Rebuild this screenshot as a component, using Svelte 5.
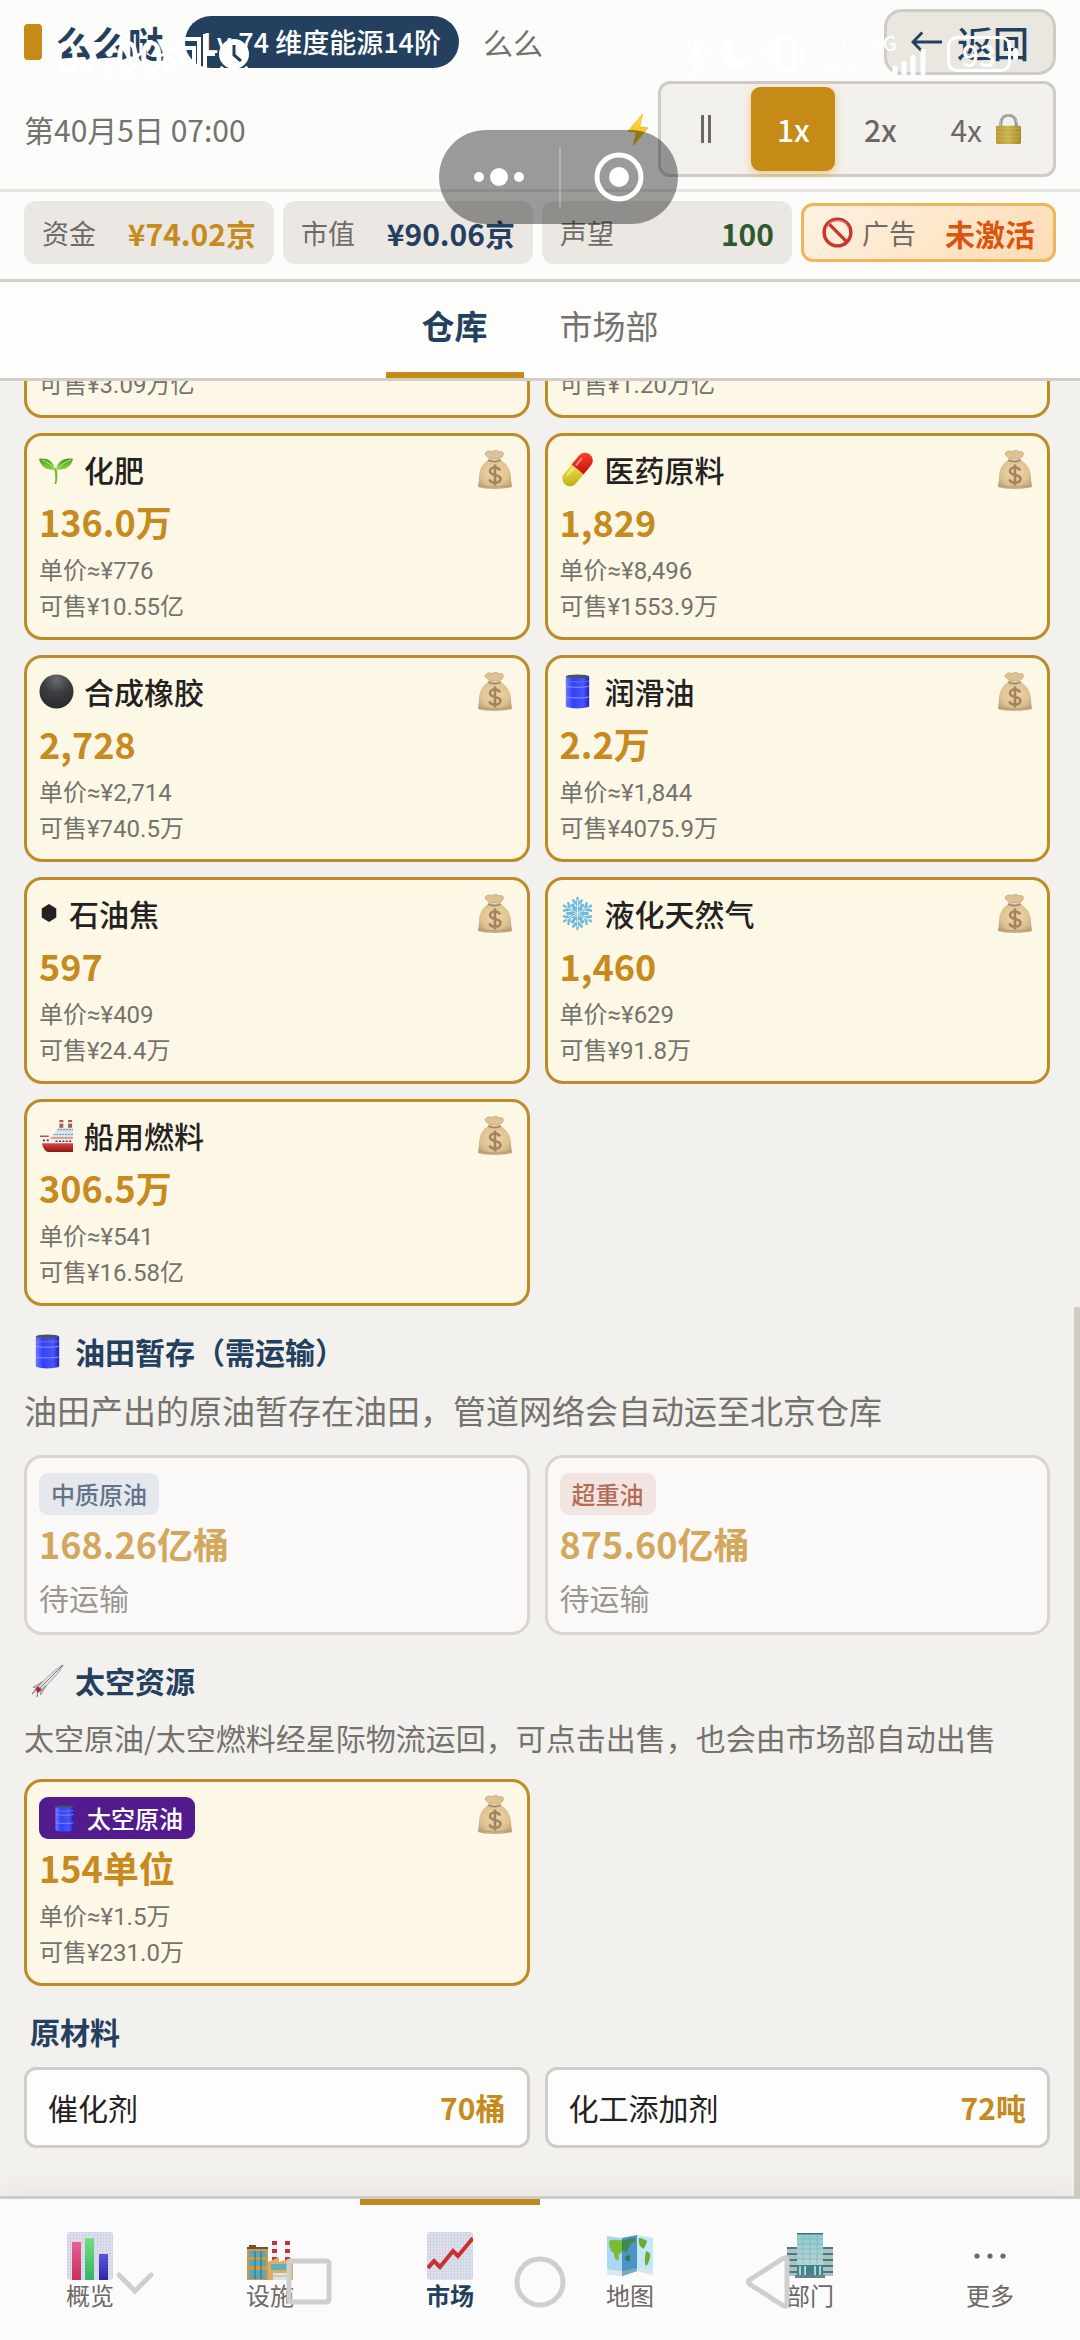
<script>
  const products = [
    { icon: 'drop', name: '柴油', amount: '5.2亿', price: '5,942', total: '3.09万亿' },
    { icon: 'drop', name: '汽油', amount: '1.9亿', price: '6,315', total: '1.20万亿' },
    { icon: 'sprout', name: '化肥', amount: '136.0万', price: '776', total: '10.55亿' },
    { icon: 'pill', name: '医药原料', amount: '1,829', price: '8,496', total: '1553.9万' },
    { icon: 'ball', name: '合成橡胶', amount: '2,728', price: '2,714', total: '740.5万' },
    { icon: 'barrel', name: '润滑油', amount: '2.2万', price: '1,844', total: '4075.9万' },
    { icon: 'hex', name: '石油焦', amount: '597', price: '409', total: '24.4万' },
    { icon: 'snow', name: '液化天然气', amount: '1,460', price: '629', total: '91.8万' },
    { icon: 'ship', name: '船用燃料', amount: '306.5万', price: '541', total: '16.58亿' }
  ];

  const pending = [
    { name: '中质原油', tone: 'blue', amount: '168.26亿桶' },
    { name: '超重油', tone: 'red', amount: '875.60亿桶' }
  ];

  const materials = [
    { name: '催化剂', amount: '70桶' },
    { name: '化工添加剂', amount: '72吨' }
  ];

  const nav = [
    { icon: 'bars', label: '概览' },
    { icon: 'factory', label: '设施' },
    { icon: 'trend', label: '市场' },
    { icon: 'map', label: '地图' },
    { icon: 'office', label: '部门' },
    { icon: 'more', label: '更多' }
  ];

  let speed = $state('1x');
  let tab = $state('仓库');
  let page = $state('市场');
</script>

{#snippet icon(name, cls)}
  <svg class={cls} viewBox="0 0 36 36" aria-hidden="true"><use href="#i-{name}" /></svg>
{/snippet}

<svg class="defs" aria-hidden="true">
  <defs>
    <linearGradient id="g-barrel"><stop offset="0" stop-color="#6f78ff" /><stop offset=".3" stop-color="#3440f5" /><stop offset=".75" stop-color="#4a55ff" /><stop offset="1" stop-color="#2020b8" /></linearGradient>
    <radialGradient id="g-bag" cx=".5" cy=".45" r=".6"><stop offset="0" stop-color="#eccb92" /><stop offset=".7" stop-color="#d3ae72" /><stop offset="1" stop-color="#a98350" /></radialGradient>
    <radialGradient id="g-ball" cx=".5" cy=".15" r=".9"><stop offset="0" stop-color="#6a6c6e" /><stop offset=".45" stop-color="#3b3e40" /><stop offset="1" stop-color="#262829" /></radialGradient>
    <linearGradient id="g-red" x1="0" y1="0" x2="1" y2="1"><stop offset="0" stop-color="#ff4a2e" /><stop offset="1" stop-color="#c60d06" /></linearGradient>
    <linearGradient id="g-yellow" x1="0" y1="0" x2="1" y2="1"><stop offset="0" stop-color="#f1e54c" /><stop offset="1" stop-color="#b9a512" /></linearGradient>
    <linearGradient id="g-hull" x1="0" y1="0" x2="0" y2="1"><stop offset="0" stop-color="#d9463d" /><stop offset="1" stop-color="#8e1512" /></linearGradient>
    <linearGradient id="g-bolt" x1="0" y1="0" x2="0" y2="1"><stop offset="0" stop-color="#ffe04a" /><stop offset="1" stop-color="#f0b400" /></linearGradient>
    <linearGradient id="g-lock"><stop offset="0" stop-color="#b79a35" /><stop offset=".5" stop-color="#cdb352" /><stop offset="1" stop-color="#a68a2b" /></linearGradient>
    <linearGradient id="g-leaf" x1="0" y1="0" x2="0" y2="1"><stop offset="0" stop-color="#4c9a1c" /><stop offset="1" stop-color="#8bd83f" /></linearGradient>
    <linearGradient id="g-pink" x1="0" y1="0" x2="0" y2="1"><stop offset="0" stop-color="#ee5e93" /><stop offset="1" stop-color="#c72f5c" /></linearGradient>
    <linearGradient id="g-green" x1="0" y1="0" x2="0" y2="1"><stop offset="0" stop-color="#72e07a" /><stop offset="1" stop-color="#36b16a" /></linearGradient>
    <linearGradient id="g-blue" x1="0" y1="0" x2="0" y2="1"><stop offset="0" stop-color="#5c54dc" /><stop offset="1" stop-color="#2c25ae" /></linearGradient>
    <linearGradient id="g-glass" x1="0" y1="0" x2="0" y2="1"><stop offset="0" stop-color="#8ccbd0" /><stop offset="1" stop-color="#c3d8d3" /></linearGradient>
    <pattern id="p-grid" width="3" height="3" patternUnits="userSpaceOnUse"><path d="M0 0H3M0 0V3" stroke="#b9bdd6" stroke-width=".6" /></pattern>

    <symbol id="i-drop" viewBox="0 0 36 36"><path d="M18 3c6 9 10 14 10 19a10 10 0 0 1-20 0C8 17 12 12 18 3Z" fill="#3a3d40" /></symbol>

    <symbol id="i-sprout" viewBox="0 0 36 36">
      <path d="M16 33c1.500-6 .5-12-.5-16l2-1c2 5 1.500 12 .5 17Z" fill="#79b43a" />
      <path d="M0 7c7-1 14 1 16.500 11C8 19 2 16 0 7Z" fill="url(#g-leaf)" />
      <path d="M35 7c-8-1-15 1-17.500 11C26 19 33 16 35 7Z" fill="url(#g-leaf)" />
      <path d="M3 8c5 2 10 5 14 10M33 8c-5 2-11 5-15 10" fill="none" stroke="#b8ec76" stroke-width="1" />
    </symbol>

    <symbol id="i-pill" viewBox="0 0 36 36">
      <g transform="rotate(40 18 18)">
        <path d="M10 18V6a8 8 0 0 1 16 0v12Z" fill="url(#g-red)" />
        <path d="M10 18v12a8 8 0 0 0 16 0V18Z" fill="url(#g-yellow)" />
        <path d="M14 7v8M14 20v9" stroke="#fff" stroke-opacity=".45" stroke-width="2" stroke-linecap="round" />
      </g>
    </symbol>

    <symbol id="i-ball" viewBox="0 0 36 36"><circle cx="18" cy="18" r="17.500" fill="url(#g-ball)" /></symbol>

    <symbol id="i-barrel" viewBox="0 0 36 36">
      <path d="M6 2.500v31c3 2.500 21 2.500 24 0v-31Z" fill="url(#g-barrel)" />
      <ellipse cx="18" cy="2.500" rx="12" ry="2" fill="#46536e" />
      <path d="M6 12.500c4 1.500 20 1.500 24 0M6 23.500c4 1.500 20 1.500 24 0" fill="none" stroke="#8f99ff" stroke-width="1" />
      <path d="M6 7c4 1.500 20 1.500 24 0" fill="none" stroke="#6f7bff" stroke-width=".8" />
    </symbol>

    <symbol id="i-hex" viewBox="0 0 18 22"><path d="M9 1l8 5v10l-8 5-8-5V6Z" fill="#24221f" /></symbol>

    <symbol id="i-snow" viewBox="0 0 36 36">
      <g fill="none" stroke="#6db7dc" stroke-width="2.400" stroke-linecap="round">
        <g id="arm"><path d="M18 18V2M13.500 4.500 18 9l4.500-4.500M12 9.500l6 5 6-5" /></g>
        <use href="#arm" transform="rotate(60 18 18)" /><use href="#arm" transform="rotate(120 18 18)" />
        <use href="#arm" transform="rotate(180 18 18)" /><use href="#arm" transform="rotate(240 18 18)" />
        <use href="#arm" transform="rotate(300 18 18)" />
      </g>
      <path d="M18 4v28M6 11l24 14M30 11 6 25" stroke="#d8f1fb" stroke-width="1" />
    </symbol>

    <symbol id="i-ship" viewBox="0 0 36 36">
      <path d="M21 2h4v9h-4zM30 2h4v9h-4z" fill="#a5585c" />
      <path d="M21 4h4v2h-4zM30 4h4v2h-4z" fill="#f0dfe0" />
      <path d="M20 10h15v4H17ZM17 14h18v6H13Z" fill="#d9e4ea" />
      <path d="M19 12h16M15 17h20" stroke="#6b93a8" stroke-width="1.200" stroke-dasharray="2 1" />
      <path d="M1 18h9l2 2h23v8H4Z" fill="#f4efec" />
      <path d="M1 18h9v1.500H1ZM12 20h23v1H12Z" fill="#c14f49" />
      <path d="M4 23h2m2 0h2m7 1h17" stroke="#3b4045" stroke-width="1.600" stroke-dasharray="2 1.500" />
      <path d="M3 26h32v9H9c-3-1-5-4-6-9Z" fill="url(#g-hull)" />
    </symbol>

    <symbol id="i-bag" viewBox="0 0 34 40">
      <path d="M12 10c-2-2-4-3-5-5 1-3 5-4 7-2 2-2 5-2 7 0 3-1 5 0 4 3 0 2-3 3-4 4Z" fill="#d4ae74" stroke="#a58253" stroke-width=".8" />
      <path d="M12 10C4 14 1 21 1 29c0 4-1 6-1 9 8 2.500 26 2.500 34 0 0-3-1-5-1-9 0-8-4-15-12-19-3 1.500-6 1.500-9 0Z" fill="url(#g-bag)" />
      <path d="M10 11c4 2 9 2 13 0" fill="none" stroke="#7f5f35" stroke-width="1.600" />
      <path d="M1 36c9 2.500 23 2.500 32 0" fill="none" stroke="#9b7a4a" stroke-width="1" />
      <path d="M22 21.500c-.8-2-2.700-3-5-3-2.800 0-5 1.400-5 3.700 0 5 10.500 2.500 10.500 7.600 0 2.400-2.300 3.900-5.400 3.900-2.700 0-4.900-1.100-5.600-3.400M17 15.500v21" fill="none" stroke="#80592b" stroke-width="2.600" />
    </symbol>

    <symbol id="i-rocket" viewBox="0 0 36 36">
      <path d="M34 2C29 4 14 17 8 25l3 3C19 22 32 8 34 2Z" fill="#e3e3e6" stroke="#8b8d93" stroke-width=".8" />
      <path d="M34 2 9.500 26.500" stroke="#77797f" stroke-width="1" />
      <path d="M13 19 3 25l4 1ZM17 23l-6 10-1-4Z" fill="#b9bbc1" stroke="#777" stroke-width=".6" />
      <path d="M8 24 4 29l3-1v4l5-5Z" fill="#a5283a" />
      <path d="M5 29 2 32M8 32l-1 3" stroke="#777" stroke-width="1.200" />
    </symbol>

    <symbol id="i-bolt" viewBox="0 0 24 36"><path d="M17 1 1 20l9 1-3 14 16-19-9-1Z" fill="url(#g-bolt)" stroke="#e3ab00" stroke-width=".6" /></symbol>

    <symbol id="i-lock" viewBox="0 0 26 32">
      <path d="M5 14V9a8 8 0 0 1 16 0v5" fill="none" stroke="#8e9094" stroke-width="3" />
      <path d="M4.500 13V9a8.500 8.500 0 0 1 17 0" fill="none" stroke="#c9cbce" stroke-width="1" />
      <rect x="0" y="12" width="26" height="19" rx="1.500" fill="url(#g-lock)" />
      <path d="M1 15h24M1 19h24M1 23h24M1 27h24" stroke="#dcc46a" stroke-opacity=".5" stroke-width=".8" />
    </symbol>

    <symbol id="i-ban" viewBox="0 0 36 36"><circle cx="18" cy="18" r="15.500" fill="none" stroke="#c8372d" stroke-width="4" /><path d="M8 8l20 20" stroke="#c8372d" stroke-width="4" /><path d="M5 13a14 14 0 0 1 26 0" fill="none" stroke="#ea8178" stroke-width="1.200" /></symbol>

    <symbol id="i-bars" viewBox="0 0 46 48">
      <rect width="46" height="48" rx="3" fill="#dfe0ee" /><rect width="46" height="48" rx="3" fill="url(#p-grid)" />
      <rect x="5" y="10" width="9" height="38" fill="url(#g-pink)" /><rect x="18" y="6" width="9" height="42" fill="url(#g-green)" /><rect x="32" y="22" width="9" height="26" fill="url(#g-blue)" />
    </symbol>

    <symbol id="i-trend" viewBox="0 0 46 48">
      <rect width="46" height="48" rx="3" fill="#dfe0ee" /><rect width="46" height="48" rx="3" fill="url(#p-grid)" />
      <path d="M1 36 7 29l6 6 13-16 5 5L46 6" fill="none" stroke="#c9322c" stroke-width="4" />
    </symbol>

    <symbol id="i-factory" viewBox="0 0 46 48">
      <path d="M25 8h5v24h-5zM38 8h5v24h-5z" fill="#f1eceb" /><path d="M25 9h5v4h-5zM25 17h5v4h-5zM25 25h5v3h-5zM38 9h5v4h-5zM38 17h5v4h-5zM38 25h5v3h-5z" fill="#b83742" />
      <path d="M0 15h21v33H0Z" fill="#cf9a4c" /><path d="M21 30l11-5v5l12-4 2 2v20H21Z" fill="#dcae62" />
      <path d="M0 15h21v2H0zM2 13h7v2H2z" fill="#75502c" />
      <path d="M2 19h17v6H2zM2 28h17v6H2zM2 38h17v9H2z" fill="#5da7b3" /><path d="M8 19v28M14 19v28" stroke="#2f6f7b" stroke-width="1" />
      <path d="M24 32h17v6H24z" fill="#5fb0bd" /><path d="M26 41h18v7H26z" fill="#e2e2e4" /><path d="M26 44h18" stroke="#b2b2b6" />
    </symbol>

    <symbol id="i-map" viewBox="0 0 46 48">
      <path d="M0 4 15 6v38L0 42Z" fill="#a9d8f2" /><path d="M15 6 30 3v36l-15 5Z" fill="#4a95c6" /><path d="M30 3l16 3v37l-16-4Z" fill="#c4e6f6" />
      <path d="M0 37l15 2v5L0 42ZM30 36l16 3v4l-16-4Z" fill="#dfe6ea" /><path d="M15 39l15-3v3l-15 5Z" fill="#7fa8bd" />
      <path d="M2 9c5-3 8 0 13-1v13c-3-1-4 3-3 6-3 4-5-1-5-6-3-1-5-5-5-12Z" fill="#7dbb34" /><path d="M15 8c5 0 8-2 13-2v4c-5 1-6 5-8 10-2 1-2-2-5-1Z" fill="#3c8a4d" />
      <path d="M32 6c4 0 6 2 8 3-1 5-3 6-3 8-3-2-6-3-5-11ZM39 19c3 1 5 3 4 6-1 4-2 8-4 9-2-5-1-9 0-15Z" fill="#69ad2e" /><path d="M19 24l4-1v6l-5-1Z" fill="#2f7b4c" />
    </symbol>

    <symbol id="i-office" viewBox="0 0 46 48">
      <path d="M0 16h46v28H0Z" fill="#a8c3c2" /><path d="M0 16h11M0 22h11M0 28h11M0 34h11M0 40h11M36 16h10M36 22h10M36 28h10M36 34h10M36 40h10" stroke="#50777d" stroke-width="1.800" />
      <path d="M10 1h26v43H10Z" fill="url(#g-glass)" /><path d="M10 1h26v1.500H10Z" fill="#4e6a72" />
      <path d="M10 7h26M10 12h26M10 17h26M10 22h26M10 27h26M16 2v30M23 2v30M30 2v30" stroke="#7fb0b4" stroke-width=".6" />
      <path d="M10 33h26v10H10z" fill="#3f8390" /><path d="M13 34v9M18 34v9M28 34v9M33 34v9" stroke="#cfe6e4" stroke-width="1.600" /><path d="M8 43h30v3H8z" fill="#6d8088" />
    </symbol>

    <symbol id="i-more" viewBox="0 0 46 48"><g fill="#6b6865"><circle cx="10" cy="24" r="2.600" /><circle cx="23" cy="24" r="2.600" /><circle cx="36" cy="24" r="2.600" /></g></symbol>
  </defs>
</svg>

<div class="app">
  <header class="top">
    <div class="row brand">
      <span class="mark"></span>
      <h1>么么哒</h1>
      <span class="level">Lv.74 维度能源14阶</span>
      <span class="owner">么么</span>
      <button class="back"><svg viewBox="0 0 34 26" aria-hidden="true"><path d="M33 13H2M12 3 2 13l10 10" /></svg>返回</button>
    </div>
    <div class="row clock">
      <time>第40月5日 07:00</time>
      <svg class="bolt" viewBox="0 0 24 36" aria-hidden="true"><use href="#i-bolt" /></svg>
      <div class="speeds">
        <button class:on={speed === 'pause'} onclick={() => (speed = 'pause')} aria-label="暂停"><svg class="pause" viewBox="0 0 10 28" aria-hidden="true"><path d="M1.500 0v28M8.500 0v28" /></svg></button>
        <button class:on={speed === '1x'} onclick={() => (speed = '1x')}>1x</button>
        <button class:on={speed === '2x'} onclick={() => (speed = '2x')}>2x</button>
        <button class="locked">4x <svg class="lock" viewBox="0 0 26 32" aria-hidden="true"><use href="#i-lock" /></svg></button>
      </div>
    </div>
  </header>

  <section class="stats">
    <div class="stat"><span>资金</span><b class="gold">¥74.02京</b></div>
    <div class="stat"><span>市值</span><b class="navy">¥90.06京</b></div>
    <div class="stat"><span>声望</span><b class="green">100</b></div>
    <button class="stat ad"><span>{@render icon('ban', 'ban')}广告</span><b>未激活</b></button>
  </section>

  <nav class="tabs">
    {#each ['仓库', '市场部'] as t}
      <button class:on={tab === t} onclick={() => (tab = t)}>{t}</button>
    {/each}
  </nav>

  <div class="view">
    <main>
      <div class="content">
        <div class="grid">
          {#each products as p}
            <button class="card">
              <span class="head">
                <span class="name">{@render icon(p.icon, p.icon === 'hex' ? 'emoji slim' : 'emoji')}{p.name}</span>
                <svg class="bag" viewBox="0 0 34 40" aria-hidden="true"><use href="#i-bag" /></svg>
              </span>
              <b class="amount">{p.amount}</b>
              <span class="sub">单价≈¥{p.price}</span>
              <span class="sub">可售¥{p.total}</span>
            </button>
          {/each}
        </div>

        <h2>{@render icon('barrel', 'emoji')}油田暂存（需运输）</h2>
        <p class="large">油田产出的原油暂存在油田，管道网络会自动运至北京仓库</p>
        <div class="grid">
          {#each pending as p}
            <div class="card waiting">
              <span class="head tagged"><span class="tag {p.tone}">{p.name}</span></span>
              <b class="amount">{p.amount}</b>
              <span class="state">待运输</span>
            </div>
          {/each}
        </div>

        <h2>{@render icon('rocket', 'emoji')}太空资源</h2>
        <p>太空原油/太空燃料经星际物流运回，可点击出售，也会由市场部自动出售</p>
        <div class="grid">
          <button class="card">
            <span class="head tagged">
              <span class="tag space">{@render icon('barrel', 'mini')}太空原油</span>
              <svg class="bag" viewBox="0 0 34 40" aria-hidden="true"><use href="#i-bag" /></svg>
            </span>
            <b class="amount">154单位</b>
            <span class="sub">单价≈¥1.5万</span>
            <span class="sub">可售¥231.0万</span>
          </button>
        </div>

        <h2>原材料</h2>
        <div class="grid">
          {#each materials as m}
            <div class="material"><span>{m.name}</span><b>{m.amount}</b></div>
          {/each}
        </div>
      </div>
    </main>
    <span class="thumb"></span>
  </div>

  <nav class="bottom">
    {#each nav as n}
      <button class:on={page === n.label} onclick={() => (page = n.label)}>
        <svg viewBox="0 0 46 48" aria-hidden="true"><use href="#i-{n.icon}" /></svg>
        <span>{n.label}</span>
      </button>
    {/each}
    <svg class="sysnav" viewBox="0 0 720 60" aria-hidden="true">
      <path d="M29 25l16 16 16-16" />
      <rect x="199" y="11" width="40" height="41" rx="2" />
      <circle cx="450" cy="32" r="23" />
      <path d="M697 10v44q-1 4-5 1l-31-20q-5-3 0-6l31-20q4-3 5 1Z" />
    </svg>
  </nav>

  <div class="status">
    <span class="time">07:00</span>
    <svg class="left-icons" viewBox="0 0 90 40" aria-hidden="true">
      <g fill="none" stroke="#fff" stroke-width="4"><path d="M2 14a20 20 0 0 1 20 20M2 23a11 11 0 0 1 11 11M18 5h18v28M22 14h9v16M42 0v36M42 20h10" /></g>
      <circle cx="4" cy="33" r="3" fill="#fff" />
      <circle cx="71" cy="20" r="15" fill="#fff" /><path d="M60 33l-3 4M82 33l3 4" stroke="#fff" stroke-width="4" />
      <path d="M71 11v10l7 6" fill="none" stroke="#24405f" stroke-width="3" />
    </svg>
    <svg class="right-icons" viewBox="0 0 124 40" aria-hidden="true">
      <path d="M3 11l18 17-9 8V4l9 8L3 29" fill="none" stroke="#fff" stroke-width="4" />
      <path d="M50 4a16 16 0 1 0 17 22A15 15 0 0 1 50 4Z" fill="#fff" />
      <g fill="none" stroke="#fff" stroke-width="4"><rect x="93" y="4" width="17" height="32" rx="3" /><path d="M87 10l-2 6 2 6-2 6M116 10l2 6-2 6 2 6" /></g>
    </svg>
    <span class="rate"><span>0</span><span>K/s</span></span>
    <span class="net">5G</span>
    <svg class="signal" viewBox="0 0 38 26" aria-hidden="true"><path d="M4 19v5M13 14v10M22 8v16M32 2v22" /></svg>
    <span class="battery">93</span>
    <span class="nub"></span>
  </div>

  <div class="capsule">
    <button aria-label="菜单"><svg viewBox="0 0 60 60" aria-hidden="true"><g fill="#fff"><circle cx="10" cy="30" r="5" /><circle cx="30" cy="30" r="9" /><circle cx="50" cy="30" r="5" /></g></svg></button>
    <button aria-label="关闭"><svg viewBox="0 0 60 60" aria-hidden="true"><circle cx="30" cy="30" r="22" fill="none" stroke="#fff" stroke-width="5" /><circle cx="30" cy="30" r="10" fill="#fff" /></svg></button>
  </div>
</div>

<style>
  :global(body) { margin: 0; background: #f3f1ed; }
  .defs { position: absolute; width: 0; height: 0; }
  .app {
    position: relative;
    display: flex;
    flex-direction: column;
    height: 100vh;
    font-family: "Noto Sans CJK SC", Roboto, sans-serif;
    font-size: 30px;
    color: #24221f;
  }
  button {
    margin: 0;
    padding: 0;
    border: 0;
    background: none;
    font: inherit;
    color: inherit;
    cursor: pointer;
  }
  h1, h2, p { margin: 0; }

  .top {
    display: flex;
    flex-direction: column;
    gap: 6px;
    padding: 9px 24px 12px;
    background: #fcfcfb;
    border-bottom: 3px solid #e9e6e1;
  }
  .row { display: flex; align-items: center; }
  .mark { width: 18px; height: 36px; border-radius: 4px; background: #c68a16; }
  h1 { margin-left: 14px; font-size: 36px; line-height: 48px; font-weight: 700; color: #24405f; }
  .level {
    margin-left: 21px;
    padding: 0 18px;
    border-radius: 26px;
    background: #24405f;
    color: #fff;
    font-size: 27px;
    line-height: 52px;
    font-weight: 500;
  }
  .owner { margin-left: 24px; color: #75726e; }
  .back {
    display: flex;
    align-items: center;
    gap: 14px;
    height: 66px;
    box-sizing: border-box;
    margin-left: auto;
    padding: 0 24px;
    border: 3px solid #cfccc5;
    border-radius: 18px;
    background: #eae7e1;
    color: #24405f;
    font-size: 36px;
    line-height: 54px;
    font-weight: 500;
  }
  .back svg { width: 32px; height: 26px; fill: none; stroke: #24405f; stroke-width: 3; }
  .clock time { line-height: 42px; color: #75726e; }
  .bolt { width: 22px; height: 33px; margin: 0 9px 0 auto; }
  .speeds {
    display: flex;
    gap: 3px;
    padding: 3px;
    border: 3px solid #cfccc5;
    border-radius: 12px;
    background: #f3f1ed;
    color: #6b6865;
  }
  .speeds button {
    display: flex;
    align-items: center;
    justify-content: center;
    min-width: 84px;
    height: 84px;
    border-radius: 9px;
    line-height: 42px;
    font-weight: 500;
  }
  .speeds .on { background: #c68a16; color: #fff; box-shadow: 0 3px 9px rgba(235, 160, 40, .5); }
  .speeds .locked { gap: 14px; padding: 0 29px 0 25px; font-weight: 400; }
  .pause { width: 10px; height: 28px; stroke: #6b6865; stroke-width: 3; }
  .lock { width: 25px; height: 31px; }

  .stats {
    display: grid;
    grid-template-columns: 250fr 250fr 250fr 255fr;
    gap: 9px;
    align-items: center;
    padding: 9px 24px 15px;
    background: #fcfcfb;
    border-bottom: 3px solid #d3cec8;
  }
  .stat {
    display: flex;
    justify-content: space-between;
    align-items: center;
    height: 63px;
    padding: 0 18px;
    border-radius: 12px;
    background: #ebe8e3;
    line-height: 42px;
  }
  .stat span { display: flex; align-items: center; gap: 9px; font-size: 27px; color: #6f6c68; }
  .gold { color: #c68a1f; }
  .navy { color: #24405f; }
  .green { color: #2f5a2d; }
  .ad {
    height: 59px;
    border: 3px solid #f0b45a;
    background: linear-gradient(135deg, #fef2e2, #fddcb4);
  }
  .ad b { color: #dc5510; }
  .ban { width: 31px; height: 31px; }

  .tabs {
    display: flex;
    justify-content: center;
    background: #fdfdfc;
    border-bottom: 3px solid #d3cec8;
  }
  .tabs button {
    padding: 0 36px 3px;
    border-bottom: 6px solid transparent;
    font-size: 33px;
    line-height: 87px;
    color: #75726e;
  }
  .tabs .on { border-color: #c68a16; color: #24405f; font-weight: 700; }

  .view { position: relative; flex: 1; min-height: 0; background: #f3f1ed; }
  main {
    display: flex;
    flex-direction: column-reverse;
    height: 100%;
    overflow-y: auto;
    scrollbar-width: none;
  }
  .content { padding: 0 30px 48px 24px; }
  .thumb { position: absolute; right: 0; bottom: 0; width: 6px; height: 49%; background: #d1ccc5; }
  .grid { display: grid; grid-template-columns: 1fr 1fr; gap: 15px; }
  .card {
    display: flex;
    flex-direction: column;
    padding: 12px;
    border: 3px solid #bd8b27;
    border-radius: 18px;
    background: #fdf7e5;
    text-align: left;
  }
  .head { display: flex; justify-content: space-between; align-items: center; height: 42px; margin-bottom: 6px; }
  .name { display: flex; align-items: center; gap: 10px; font-weight: 500; line-height: 42px; }
  .emoji { width: 35px; height: 35px; }
  .slim { width: 20px; height: 20px; }
  .bag { width: 34px; height: 40px; margin-right: 3px; opacity: .72; }
  .amount { margin-bottom: 6px; font-size: 36px; line-height: 51px; color: #c68a1f; }
  .sub { font-family: Roboto, "Noto Sans CJK SC", sans-serif; font-size: 24px; line-height: 36px; color: #75726e; }
  .tagged { align-items: flex-start; height: 45px; margin-bottom: 3px; }
  .tag {
    display: flex;
    align-items: center;
    gap: 9px;
    margin-top: 3px;
    padding: 0 12px;
    border-radius: 9px;
    font-size: 24px;
    line-height: 42px;
    font-weight: 500;
  }
  .blue { background: #e0e5ec; color: #24405f; }
  .red { background: #f2dfdb; color: #9c3415; }
  .space { background: #521c8e; color: #fff; }
  .mini { width: 27px; height: 27px; }
  .waiting { border-color: #cfccc5; background: #fdfdfd; opacity: .7; }
  .state { line-height: 45px; color: #75726e; }

  h2 {
    display: flex;
    align-items: center;
    gap: 10px;
    margin: 24px 0 15px;
    padding-left: 6px;
    font-size: 30px;
    line-height: 42px;
    font-weight: 700;
    color: #24405f;
  }
  p { margin-bottom: 21px; line-height: 42px; color: #75726e; }
  .large { font-size: 33px; line-height: 47px; }
  .material {
    display: flex;
    justify-content: space-between;
    padding: 0 21px;
    border: 3px solid #d0cdc9;
    border-radius: 12px;
    background: #fdfdfd;
    line-height: 75px;
  }
  .material b { color: #c68a1f; }

  .bottom {
    position: relative;
    display: grid;
    grid-template-columns: repeat(6, 1fr);
    border-top: 3px solid #cdcccb;
    background: #fbfbfb;
    box-shadow: 0 -6px 24px rgba(60, 50, 40, .06);
  }
  .bottom button {
    display: flex;
    flex-direction: column;
    align-items: center;
    padding: 27px 0 30px;
    border-top: 6px solid transparent;
    font-size: 24px;
    line-height: 30px;
    color: #6b6865;
  }
  .bottom button svg { width: 46px; height: 48px; }
  .bottom .on { border-color: #c08a1d; color: #24405f; font-weight: 700; }
  .sysnav {
    position: absolute;
    left: 90px;
    top: 51px;
    width: 720px;
    height: 60px;
    fill: none;
    stroke: #cfcfcf;
    stroke-width: 5;
    stroke-linecap: round;
    pointer-events: none;
  }

  .status {
    position: absolute;
    inset: 33px 62px auto 55px;
    display: flex;
    align-items: center;
    height: 42px;
    color: #fff;
    font-weight: 500;
    pointer-events: none;
  }
  .time { font-size: 42px; line-height: 42px; }
  .left-icons { width: 90px; height: 40px; margin-left: 0; }
  .right-icons { width: 124px; height: 40px; margin-left: auto; }
  .rate { display: flex; flex-direction: column; align-items: center; margin-left: 18px; font-size: 20px; line-height: 20px; }
  .net { align-self: flex-start; margin-left: 15px; font-size: 20px; line-height: 20px; }
  .signal { align-self: flex-end; width: 38px; height: 26px; margin-left: -6px; fill: none; stroke: #fff; stroke-width: 5; stroke-linecap: round; }
  .battery {
    margin-left: 18px;
    padding: 0 12px;
    border: 3px solid #fff;
    border-radius: 10px;
    line-height: 30px;
  }
  .nub { width: 5px; height: 12px; margin-left: 2px; border-radius: 2px; background: #fff; }

  .capsule {
    position: absolute;
    left: 439px;
    top: 130px;
    display: grid;
    grid-template-columns: 1fr 1fr;
    align-items: center;
    width: 239px;
    height: 94px;
    border-radius: 47px;
    background: rgba(0, 0, 0, .39);
  }
  .capsule button { height: 60px; }
  .capsule button + button { border-left: 2px solid rgba(255, 255, 255, .25); }
  .capsule svg { width: 60px; height: 60px; }
</style>
